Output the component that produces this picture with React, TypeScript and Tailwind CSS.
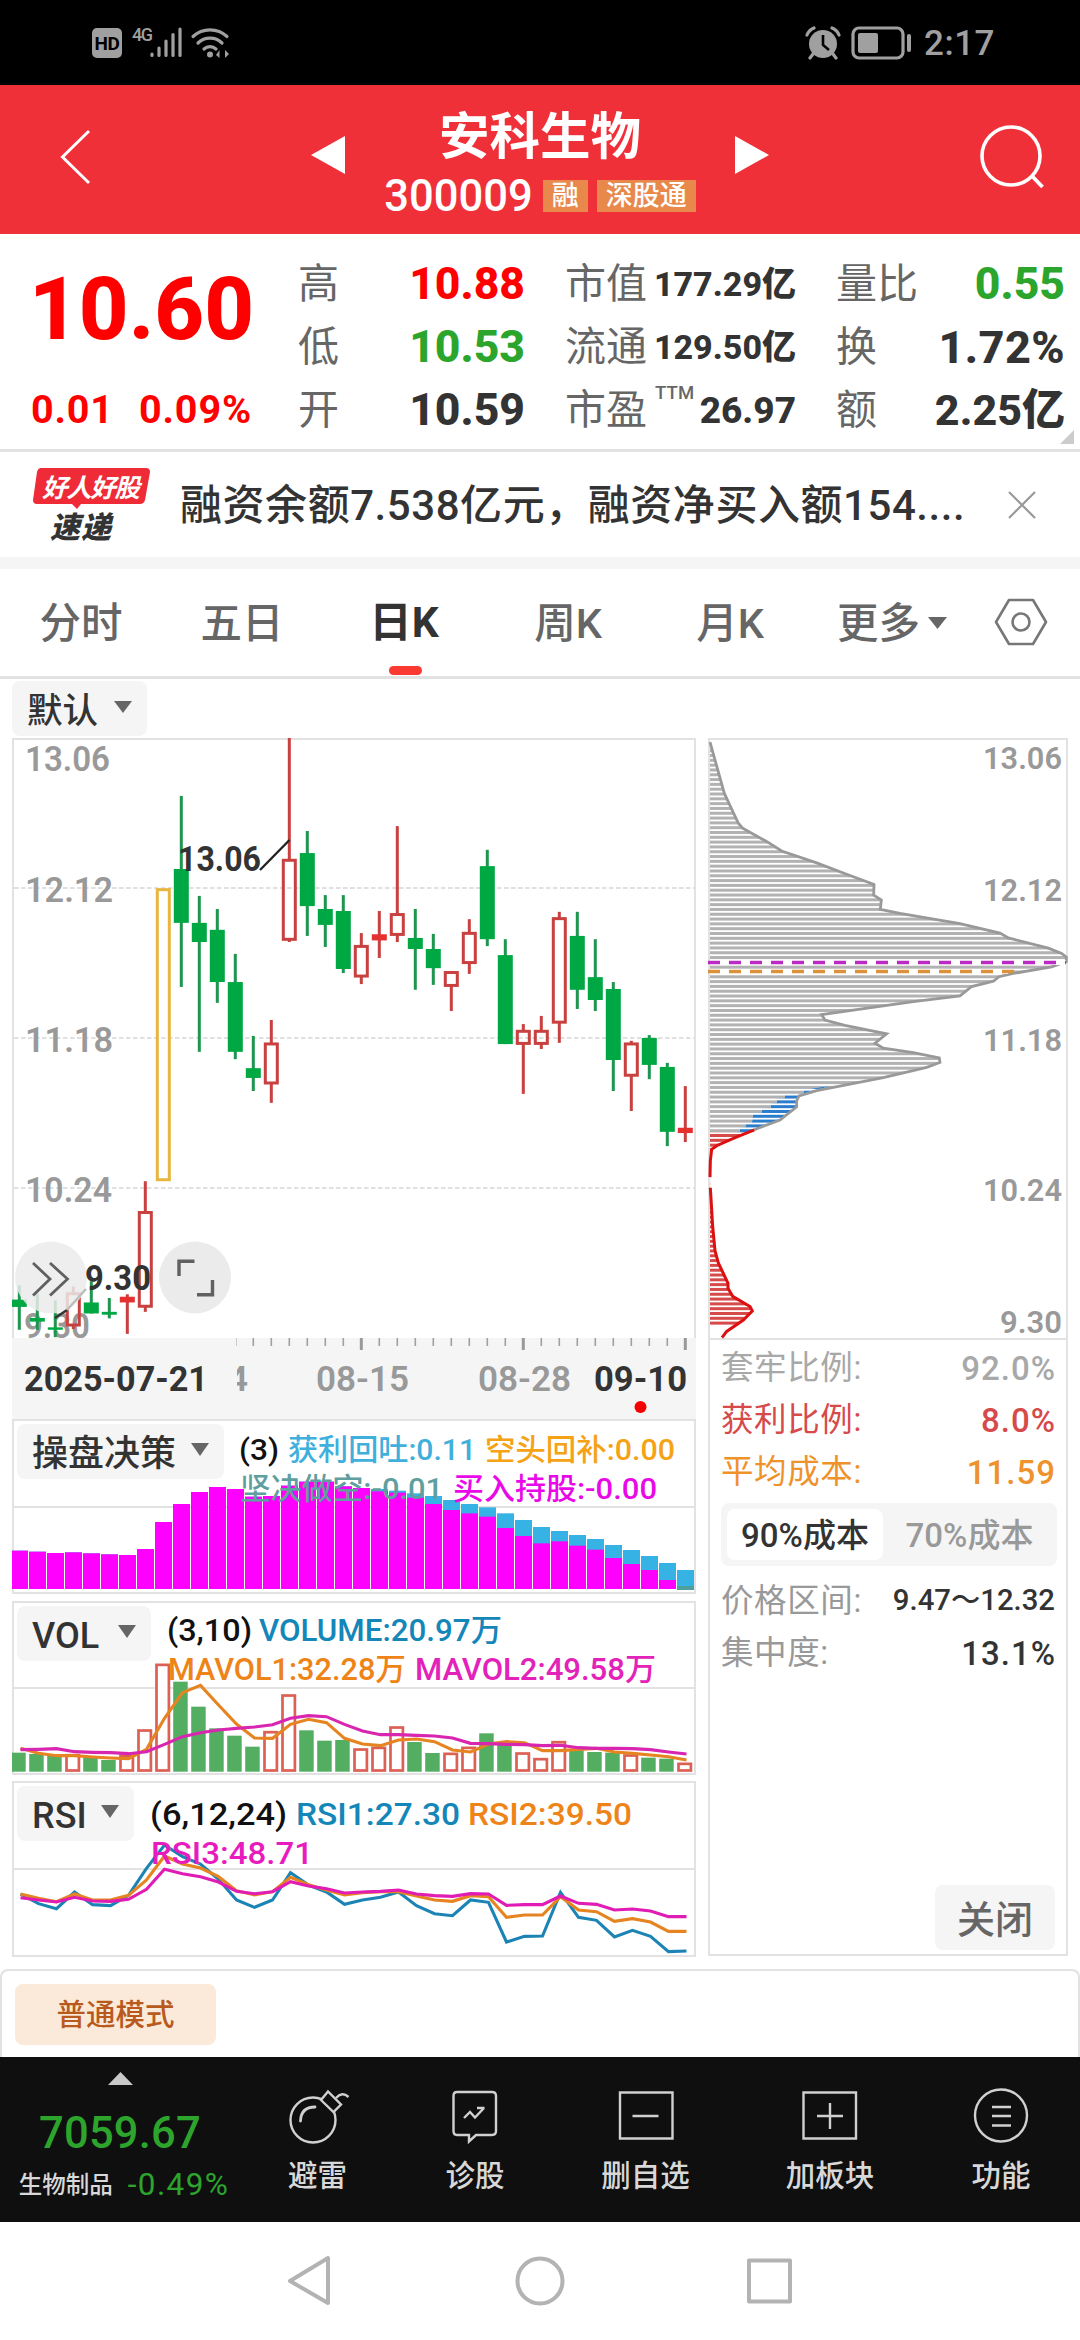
import React from "react";

const SANS = '[font-family:Roboto,"Noto_Sans_CJK_SC",sans-serif]';
const FONT = 'Roboto, "Noto Sans CJK SC", sans-serif';

type TxtProps = {
  x: number;
  y: number;
  size: number;
  fill: string;
  w?: number;
  len?: number;
  end?: boolean;
  children: string;
};

/** Chart label; x/y is the left (or right) end of the baseline. */
function Txt({ x, y, size, fill, w = 500, len, end, children }: TxtProps) {
  return (
    <text
      x={x}
      y={y}
      fontFamily={FONT}
      fontSize={size}
      fontWeight={w}
      fill={fill}
      textAnchor={end ? "end" : "start"}
      textLength={len}
      lengthAdjust="spacingAndGlyphs"
    >
      {children}
    </text>
  );
}

const RED = "#c8403f";
const GREEN = "#00a844";
const GREEN_WICK = "#1f9650";
const GRID = "#e2e2e2";

/* kind: g = falling, r = rising (hollow), f = flat (solid red), y = limit-up; then high, top, bottom, low */
const CANDLES: [string, number, number, number, number][] = [
  ["g", 1385, 1420, 1438, 1494],
  ["g", 1405, 1465, 1474, 1494],
  ["g", 1422, 1488, 1494, 1512],
  ["r", 1388, 1402, 1486, 1492],
  ["g", 1375, 1427, 1454, 1454],
  ["g", 1416, 1450, 1457, 1466],
  ["f", 1407, 1413, 1427, 1504],
  ["r", 1130, 1203, 1440, 1450],
  ["y", 412, 412, 1130, 1130],
  ["g", 186, 365, 497, 654],
  ["g", 431, 497, 544, 813],
  ["g", 463, 514, 642, 693],
  ["g", 573, 642, 813, 831],
  ["g", 774, 853, 877, 909],
  ["r", 735, 790, 893, 938],
  ["r", 44, 340, 541, 544],
  ["g", 272, 326, 456, 529],
  ["g", 429, 463, 502, 556],
  ["g", 429, 468, 610, 620],
  ["r", 522, 551, 631, 647],
  ["f", 468, 525, 540, 583],
  ["r", 260, 473, 529, 544],
  ["g", 463, 534, 561, 661],
  ["g", 524, 561, 608, 649],
  ["r", 615, 615, 654, 713],
  ["r", 488, 519, 598, 622],
  ["g", 318, 358, 537, 554],
  ["g", 537, 576, 794, 794],
  ["r", 745, 759, 796, 916],
  ["r", 725, 759, 796, 806],
  ["r", 470, 483, 744, 791],
  ["g", 470, 529, 661, 708],
  ["g", 537, 630, 686, 713],
  ["g", 642, 659, 833, 909],
  ["r", 786, 790, 874, 958],
  ["g", 772, 779, 845, 880],
  ["g", 840, 850, 1009, 1044],
  ["f", 897, 999, 1012, 1034],
];
const cx = (i: number) => 19.3 + 18 * i;
const py = (v: number) => 720 + v / 2.45;

function Candles() {
  return (
    <>
      {CANDLES.map(([k, h, t, b, l], i) => {
        const x = cx(i);
        const top = py(t);
        const bot = py(b);
        if (k === "g")
          return (
            <g key={i}>
              <rect x={x - 1.5} y={py(h)} width={3} height={py(l) - py(h)} fill={GREEN_WICK} />
              <rect x={x - 7.5} y={top} width={15} height={bot - top} fill={GREEN} />
            </g>
          );
        if (k === "f")
          return (
            <g key={i}>
              <rect x={x - 1.5} y={py(h)} width={3} height={py(l) - py(h)} fill={RED} />
              <rect x={x - 7.5} y={top} width={15} height={bot - top} fill="#e53030" />
            </g>
          );
        return (
          <g key={i}>
            {k === "r" && (
              <>
                <rect x={x - 1.5} y={py(h)} width={3} height={top - py(h) + 1} fill={RED} />
                <rect x={x - 1.5} y={bot - 1} width={3} height={py(l) - bot + 1} fill={RED} />
              </>
            )}
            <rect
              x={x - 6}
              y={top + 1.5}
              width={12}
              height={bot - top - 3}
              fill="none"
              stroke={k === "y" ? "#e8b53e" : RED}
              strokeWidth={3}
            />
          </g>
        );
      })}
    </>
  );
}

function KChart() {
  return (
    <svg className="block h-[600px] w-[684px]" viewBox="12 738 684 600">
      <path d="M13 1338V739H695V1338" fill="none" stroke={GRID} strokeWidth={2} />
      {[888, 1038, 1188].map((y) => (
        <path key={y} d={`M14 ${y}H694`} stroke="#e0e0e0" strokeWidth={2} strokeDasharray="4.5 2.5" />
      ))}
      <Txt x={25} y={770.5} size={35.5} fill="#999" w={600} len={85}>13.06</Txt>
      <Txt x={25} y={901.5} size={35.5} fill="#999" w={600} len={88}>12.12</Txt>
      <Txt x={25} y={1051.5} size={35.5} fill="#999" w={600} len={88}>11.18</Txt>
      <Txt x={25} y={1201.5} size={35.5} fill="#999" w={600} len={87}>10.24</Txt>
      <Txt x={24} y={1337.5} size={35.5} fill="#999" w={600} len={66}>9.30</Txt>
      <Candles />
      <circle cx={51} cy={1277.5} r={36} fill="#ebebeb" fillOpacity={0.85} />
      <circle cx={195} cy={1277.5} r={36} fill="#ebebeb" />
      <path d="M33 1263L50 1279L33 1295.5M50 1263L67.5 1279L50 1295.5" fill="none" stroke="#606060" strokeWidth={2.8} />
      <path d="M179 1276V1261.2H194.5M197 1294.8H212.5V1280" fill="none" stroke="#606060" strokeWidth={3.4} />
      <path d="M55 1318L67 1310" stroke="#333" strokeWidth={2.4} />
      <path d="M67 1310L86 1289" stroke="#bdbdbd" strokeWidth={2.4} />
      <path d="M260 870L289.5 840" stroke="#222" strokeWidth={2.4} />
      <Txt x={178} y={871} size={35.5} fill="#333" w={700} len={83}>13.06</Txt>
      <Txt x={85} y={1290} size={35.5} fill="#333" w={700} len={66}>9.30</Txt>
    </svg>
  );
}

function Axis() {
  return (
    <svg className="block h-[81px] w-[684px] bg-[#f5f5f5]" viewBox="12 1338 684 81">
      {CANDLES.map((_, i) => {
        if (i < 13) return null;
        const major = i === 19 || i === 28 || i === 37;
        return (
          <rect
            key={i}
            x={cx(i) - (major ? 1.5 : 0.8)}
            y={1338}
            width={major ? 3 : 1.6}
            height={major ? 12 : 8}
            fill={major ? "#999" : "#a0a0a0"}
          />
        );
      })}
      <rect x={236} y={1338} width={1} height={8} fill="#ccc" />
      <clipPath id="axis-clip">
        <rect x={237} y={1350} width={30} height={60} />
      </clipPath>
      <g clipPath="url(#axis-clip)">
        <Txt x={228} y={1391} size={35} fill="#999" w={600}>4</Txt>
      </g>
      <Txt x={24} y={1391} size={35} fill="#333" w={700} len={184}>2025-07-21</Txt>
      <Txt x={316} y={1391} size={35} fill="#999" w={600} len={93}>08-15</Txt>
      <Txt x={478} y={1391} size={35} fill="#999" w={600} len={93}>08-28</Txt>
      <Txt x={594} y={1391} size={35} fill="#333" w={700} len={93}>09-10</Txt>
      <circle cx={640.5} cy={1407} r={6} fill="#f50000" />
    </svg>
  );
}

/* [total top, magenta top] of each stacked bar */
const STRATEGY: [number, number][] = [
  [692, 692], [695, 695], [699, 699], [697, 697], [700, 700], [703, 703], [705, 705], [687, 687],
  [606, 606], [552, 552], [516, 516], [501, 501], [507, 507], [530, 530], [528, 528], [497, 497],
  [485, 485], [485, 485], [499, 499], [504, 504], [507, 514], [512, 518], [520, 533], [528, 552],
  [540, 570], [552, 580], [562, 590], [580, 624], [600, 648], [621, 670], [633, 664], [645, 677],
  [657, 689], [675, 714], [690, 732], [708, 750], [729, 780], [750, 798],
];

function StrategyChart() {
  const y = (v: number) => 1320 + v / 3;
  return (
    <svg className="block h-[175px] w-[684px]" viewBox="12 1419 684 175">
      <path d="M13 1507H695" stroke={GRID} strokeWidth={2} />
      <rect x={13} y={1420} width={682} height={173} fill="none" stroke={GRID} strokeWidth={2} />
      {STRATEGY.map(([t, m], i) => {
        const x = 11 + 18 * i;
        const last = i === 37;
        return (
          <g key={i}>
            <rect x={x} y={y(t)} width={17} height={1589 - y(t)} fill="#36b2e4" />
            <rect x={x} y={y(m)} width={17} height={(last ? 1590 : 1589) - y(m)} fill={last ? "#4f9f9f" : "#ff00ff"} />
          </g>
        );
      })}
      <Txt x={239} y={1460} size={30} fill="#111" len={40}>(3)</Txt>
      <Txt x={288} y={1460} size={30} fill="#3fb0dc" len={188}>获利回吐:0.11</Txt>
      <Txt x={485} y={1460} size={30} fill="#f5a216" len={190}>空头回补:0.00</Txt>
      <Txt x={240} y={1499} size={30} fill="#5f9fa0" len={203}>坚决做空:-0.01</Txt>
      <Txt x={453} y={1499} size={30} fill="#e808e8" len={204}>买入持股:-0.00</Txt>
    </svg>
  );
}

const VOLUME: [string, number][] = [
  ["g", 488], ["g", 492], ["g", 497], ["r", 492], ["g", 503], ["g", 510], ["r", 494], ["r", 418],
  ["r", 221], ["g", 275], ["g", 350], ["g", 415], ["g", 437], ["g", 470], ["r", 423], ["r", 313],
  ["g", 421], ["g", 452], ["g", 450], ["r", 475], ["r", 470], ["r", 409], ["g", 456], ["g", 489],
  ["r", 488], ["r", 470], ["g", 430], ["g", 463], ["r", 487], ["r", 504], ["r", 453], ["g", 480],
  ["g", 486], ["g", 488], ["r", 493], ["g", 503], ["g", 506], ["r", 518],
];
const MAVOL1 = [475, 490, 497, 497, 501, 504, 506, 478, 385, 308, 286, 345, 402, 444, 445, 403, 388, 398, 445, 462, 467, 450, 447, 455, 480, 486, 462, 455, 458, 482, 482, 478, 475, 486, 490, 495, 500, 510];
const MAVOL2 = [479, 478, 476, 485, 487, 488, 491, 485, 463, 440, 428, 420, 415, 411, 404, 385, 377, 380, 403, 423, 434, 434, 436, 438, 444, 460, 461, 463, 464, 467, 466, 473, 475, 475, 476, 479, 486, 492];
const RSI1 = [912, 941, 956, 906, 944, 947, 916, 835, 765, 800, 822, 868, 930, 952, 930, 848, 885, 906, 943, 930, 922, 906, 947, 971, 977, 930, 937, 1056, 1039, 1038, 907, 982, 991, 1041, 1021, 1039, 1085, 1083];
const RSI2 = [912, 925, 935, 912, 930, 930, 916, 870, 798, 822, 834, 860, 902, 915, 905, 862, 884, 900, 915, 908, 905, 905, 918, 930, 934, 917, 920, 982, 975, 975, 920, 960, 965, 994, 986, 996, 1024, 1024];
const RSI3 = [923, 930, 936, 922, 933, 934, 928, 898, 838, 851, 860, 876, 904, 911, 905, 875, 888, 896, 909, 906, 904, 900, 912, 917, 919, 911, 912, 946, 944, 944, 918, 940, 943, 960, 957, 963, 980, 980];

function Line({ data, color }: { data: number[]; color: string }) {
  return (
    <polyline
      points={data.map((v, i) => `${20.5 + 18 * i},${1590 + v / 3}`).join(" ")}
      fill="none"
      stroke={color}
      strokeWidth={3.1}
    />
  );
}

function VolumeChart() {
  const y = (v: number) => 1590 + v / 3;
  return (
    <svg className="block h-[174px] w-[684px]" viewBox="12 1601 684 174">
      <path d="M13 1688H695" stroke={GRID} strokeWidth={2} />
      <rect x={13} y={1602} width={682} height={172} fill="none" stroke={GRID} strokeWidth={2} />
      {VOLUME.map(([k, v], i) => {
        const x = 11.2 + 18 * i;
        return k === "g" ? (
          <rect key={i} x={x} y={y(v)} width={14.5} height={1771.7 - y(v)} fill="#53ae61" />
        ) : (
          <rect
            key={i}
            x={x + 1.3}
            y={y(v) + 1.2}
            width={12.4}
            height={1771 - y(v) - 1.7}
            fill="#fff"
            stroke="#dc6054"
            strokeWidth={2.7}
          />
        );
      })}
      <Line data={MAVOL1} color="#e58420" />
      <Line data={MAVOL2} color="#d826b0" />
      <Txt x={167} y={1641} size={30.5} fill="#111" len={85}>(3,10)</Txt>
      <Txt x={259} y={1641} size={30.5} fill="#1486b8" len={243}>VOLUME:20.97万</Txt>
      <Txt x={168} y={1680} size={30.5} fill="#ee8418" len={238}>MAVOL1:32.28万</Txt>
      <Txt x={415} y={1680} size={30.5} fill="#e222b8" len={241}>MAVOL2:49.58万</Txt>
    </svg>
  );
}

function RsiChart() {
  return (
    <svg className="block h-[176px] w-[684px]" viewBox="12 1781 684 176">
      <path d="M13 1869H695" stroke={GRID} strokeWidth={2} />
      <rect x={13} y={1782} width={682} height={174} fill="none" stroke={GRID} strokeWidth={2} />
      <Line data={RSI1} color="#1c84b4" />
      <Line data={RSI2} color="#e58420" />
      <Line data={RSI3} color="#e01cb4" />
      <Txt x={150} y={1825} size={32} fill="#111" len={137}>(6,12,24)</Txt>
      <Txt x={296} y={1825} size={32} fill="#1486b8" len={164}>RSI1:27.30</Txt>
      <Txt x={468} y={1825} size={32} fill="#ee8418" len={164}>RSI2:39.50</Txt>
      <Txt x={151} y={1864} size={32} fill="#e81cbe" len={162}>RSI3:48.71</Txt>
    </svg>
  );
}

function Down({ className = "w-[18px] h-3" }: { className?: string }) {
  return (
    <svg className={className} viewBox="0 0 18 12" preserveAspectRatio="none">
      <path d="M0 0H18L9 12Z" fill="#666" />
    </svg>
  );
}

function PanelButton({ label, className }: { label: string; className: string }) {
  return (
    <button
      className={`absolute left-[5px] top-[5px] flex h-[55px] items-center justify-between rounded-lg bg-[#f5f5f5] pl-[15px] pr-[15px] text-[36px] leading-none font-medium text-[#333] ${className}`}
    >
      <span className="pt-[5px]">{label}</span>
      <Down className="mb-1 h-[13px] w-[18px]" />
    </button>
  );
}

const OUTLINE: [number, number][] = [
  [30, 54], [73, 180], [115, 253], [128, 265], [207, 301], [245, 321], [350, 350], [440, 378],
  [522, 403], [521, 429], [544, 441], [541, 464], [600, 474], [780, 499], [900, 522], [925, 534],
  [1045, 559], [1085, 572], [1099, 581], [1099, 592], [1055, 605], [940, 621], [897, 629],
  [880, 640], [815, 653], [780, 676], [640, 690], [365, 722], [375, 735], [435, 748], [560, 769],
  [525, 792], [550, 804], [640, 815], [718, 828], [720, 839], [680, 851], [550, 876], [350, 908],
  [297, 921], [290, 933], [290, 948], [240, 980], [163, 1004],
];
const RED_TOP: [number, number][] = [[163, 1004], [100, 1025], [50, 1043], [35, 1052], [31, 1080], [30, 1120]];
const RED_LOW: [number, number][] = [
  [31, 1146], [38, 1240], [45, 1300], [55, 1330], [84, 1380], [84, 1392], [98, 1412], [150, 1437],
  [157, 1448], [130, 1470], [80, 1498], [66, 1513],
];
const BLUE: [number, number][] = [
  [390, 896], [312, 906], [312, 915], [255, 917], [255, 927], [231, 928], [231, 938], [213, 940],
  [213, 950], [186, 951], [186, 962], [160, 963], [156, 987], [137, 988], [137, 998], [120, 999],
  [120, 1009], [102, 1010], [102, 1022], [163, 1004], [240, 980], [290, 948], [290, 933], [297, 921], [350, 908],
];
const pts = (a: [number, number][]) => a.map(([u, v]) => `${700 + u / 3},${py(v)}`).join(" ");

function ChipChart() {
  const rows = Array.from({ length: 125 }, (_, i) => py(582) + (i - 48) * 4.81);
  return (
    <svg className="block h-[602px] w-[360px]" viewBox="708 738 360 602">
      <defs>
        <clipPath id="chip-gray"><polygon points={`710,${py(54)} ${pts(OUTLINE)} 733,${py(1012)} 710,${py(1012)}`} /></clipPath>
        <clipPath id="chip-red"><polygon points={`710,${py(1010)} ${pts([[145, 1010], ...RED_TOP.slice(1), ...RED_LOW])} 710,1338`} /></clipPath>
        <clipPath id="chip-blue"><polygon points={pts(BLUE)} /></clipPath>
      </defs>
      <g clipPath="url(#chip-gray)">
        {rows.map((y) => <rect key={y} x={710} y={y - 1.5} width={358} height={3} fill="#b2b2b2" />)}
      </g>
      <g clipPath="url(#chip-blue)">
        {rows.map((y) => (
          <g key={y}>
            <rect x={710} y={y - 2.4} width={358} height={4.8} fill="#fff" />
            <rect x={710} y={y - 1.5} width={358} height={3} fill="#2a7ccc" />
          </g>
        ))}
      </g>
      <g clipPath="url(#chip-red)">
        {rows.map((y) => <rect key={y} x={710} y={y - 1.5} width={358} height={3} fill="#d64a4a" />)}
      </g>
      <path d="M709 1340V739H1067V1340M709 1339H1067" fill="none" stroke={GRID} strokeWidth={2} />
      <polyline points={pts(OUTLINE)} fill="none" stroke="#999" strokeWidth={2.8} />
      <polyline points={pts(RED_TOP)} fill="none" stroke="#dc1010" strokeWidth={3} />
      <polyline points={pts(RED_LOW)} fill="none" stroke="#dc1010" strokeWidth={3} />
      <path d={`M710 ${py(594)}H1066`} stroke="#fff" strokeWidth={5} />
      <path d={`M710 ${py(616)}H1008`} stroke="#fff" strokeWidth={5} />
      <path d={`M708 ${py(594)}H1066`} stroke="#bb2bc4" strokeWidth={3.4} strokeDasharray="12 9" />
      <path d={`M708 ${py(616)}H1014`} stroke="#db923a" strokeWidth={3.4} strokeDasharray="12 9" />
      <Txt x={1062} y={769.3} size={31.5} fill="#999" w={600} len={79} end>13.06</Txt>
      <Txt x={1062} y={901} size={31.5} fill="#999" w={600} len={79} end>12.12</Txt>
      <Txt x={1062} y={1051} size={31.5} fill="#999" w={600} len={79} end>11.18</Txt>
      <Txt x={1062} y={1201} size={31.5} fill="#999" w={600} len={79} end>10.24</Txt>
      <Txt x={1062} y={1333} size={31.5} fill="#999" w={600} len={62} end>9.30</Txt>
    </svg>
  );
}

function Stat({ label, value, row, val = "text-[33px] tracking-[1px] -mr-px" }: { label: string; value: string; row: string; val?: string }) {
  return (
    <div className={`flex h-[52px] items-center justify-between leading-none ${row}`}>
      <span className="text-[32.5px] tracking-[0.6px]">{label}</span>
      <span className={`font-medium ${val}`}>{value}</span>
    </div>
  );
}

function StatusBar() {
  return (
    <header className="flex h-[85px] justify-between bg-black px-[92px] pr-[85px] text-[#a0a0a0]">
      <div className="flex pt-[27px]">
        <div className="mt-px flex h-[30px] w-[30px] items-center justify-center rounded-[5px] bg-[#a0a0a0] text-[19px] leading-none font-bold tracking-[-0.5px] text-black">HD</div>
        <span className="ml-[10px] w-[22px] text-[18px] leading-[15px] font-medium tracking-[-1.5px]">4G</span>
        <svg className="-ml-1 h-[31px] w-[82px]" viewBox="150 27 82 31">
          <g stroke="#a0a0a0" strokeWidth={3.2} strokeLinecap="round" fill="none">
            <path d="M152 55.5V54M159 55.5V48M166 55.5V41M173 55.5V34.5M180 55.5V29" />
            <path d="M193 36.5A25 25 0 0 1 227 36.5M198 43A17 17 0 0 1 222 43M204 49A9 9 0 0 1 216 49" strokeWidth={3.2} />
          </g>
          <circle cx={210} cy={54.5} r={3} fill="#a0a0a0" />
          <path d="M216 55L219.5 50V58M229 54L225 58V50" fill="#a0a0a0" />
        </svg>
      </div>
      <div className="flex pt-[26px]">
        <svg className="h-[34px] w-[108px]" viewBox="804 26 108 34">
          <circle cx={822} cy={44} r={14} fill="#a0a0a0" />
          <path d="M822 35V45L828 50" stroke="#000" strokeWidth={2.6} fill="none" />
          <path d="M806 35Q808 30 813 28M838 35Q836 30 831 28M812 54L809 58M832 54L835 58" stroke="#a0a0a0" strokeWidth={3.2} fill="none" strokeLinecap="round" />
          <rect x={852} y={28} width={50} height={30} rx={6} fill="none" stroke="#a0a0a0" strokeWidth={3.2} />
          <rect x={857} y={33} width={20} height={20} rx={2} fill="#a0a0a0" />
          <path d="M908 36V50" stroke="#a0a0a0" strokeWidth={4} strokeLinecap="round" />
        </svg>
        <span className="ml-[11px] text-[35px] leading-[36px] font-medium tracking-[0.5px]">2:17</span>
      </div>
    </header>
  );
}

function TitleBar() {
  return (
    <div className="flex h-[149px] items-center justify-between bg-[#f03039] pr-[35px] pl-[58px] text-white">
      <svg className="mb-[6px] h-[60px] w-[36px]" viewBox="0 0 36 60">
        <path d="M31 4L4.500 30L31 56" fill="none" stroke="#fff" strokeWidth={3} />
      </svg>
      <div className="ml-[7px] flex items-center">
        <svg className="mb-[9px] h-[38px] w-[34px]" viewBox="0 0 34 38"><path d="M34 0V38L0 19Z" fill="#fff" /></svg>
        <div className="flex w-[390px] flex-col items-center pt-[13px]">
          <h1 className="text-[50.500px] leading-[62px] font-bold">安科生物</h1>
          <div className="flex h-[58px] items-center">
            <span className="text-[43.500px] leading-none font-medium">300009</span>
            <span className="mb-[2px] ml-[10px] flex h-8 items-center bg-[#e8894b] px-[9px] text-[27px] leading-none font-medium">融</span>
            <span className="mb-[2px] ml-[9px] flex h-8 items-center bg-[#e8894b] px-[9px] text-[27px] leading-none font-medium">深股通</span>
          </div>
        </div>
        <svg className="mb-[9px] h-[38px] w-[34px]" viewBox="0 0 34 38"><path d="M0 0V38L34 19Z" fill="#fff" /></svg>
      </div>
      <svg className="mb-[7px] h-[66px] w-[66px]" viewBox="978 122 66 66">
        <circle cx={1010} cy={155} r={29} fill="none" stroke="#fff" strokeWidth={3.6} />
        <path d="M1031 175L1041.500 186" stroke="#fff" strokeWidth={3.8} />
      </svg>
    </div>
  );
}

function Quote({ label, value, vc, sup }: { label: string; value: string; vc: string; sup?: string }) {
  return (
    <div className="flex h-[63px] items-center justify-between pt-[3px] leading-none">
      <span className="flex text-[41px] text-[#666]">
        {label}
        {sup && <sup className="top-0 -mt-[2px] ml-2 text-[18.5px] leading-[10px] font-medium tracking-[0.2px]">{sup}</sup>}
      </span>
      <span className={`font-extrabold ${vc}`}>{value}</span>
    </div>
  );
}

function Quotes() {
  return (
    <section className="relative flex h-[218px] border-b-[3px] border-[#e2e2e2] pt-[17px]">
      <div className="flex w-[283px] flex-col items-center font-extrabold text-[#ff0000]">
        <div className="h-[114px] text-[86.500px] leading-[117px]">10.60</div>
        <div className="mt-3 flex h-[63px] items-center gap-[25px] pt-[2px] text-[39.500px] leading-none font-bold tracking-[0.9px]">
          <span>0.01</span>
          <span>0.09%</span>
        </div>
      </div>
      <div className="ml-[15px] w-[227px]">
        <Quote label="高" value="10.88" vc="text-[44.500px] text-[#ff0000]" />
        <Quote label="低" value="10.53" vc="text-[44.500px] text-[#2ba52b]" />
        <Quote label="开" value="10.59" vc="text-[44.500px] text-[#333]" />
      </div>
      <div className="ml-[40px] w-[231px]">
        <Quote label="市值" value="177.29亿" vc="text-[34px] text-[#333]" />
        <Quote label="流通" value="129.50亿" vc="text-[34px] text-[#333]" />
        <Quote label="市盈" sup="TTM" value="26.97" vc="text-[37px] text-[#333]" />
      </div>
      <div className="ml-[40px] w-[229px]">
        <Quote label="量比" value="0.55" vc="text-[44.500px] text-[#2ba52b]" />
        <Quote label="换" value="1.72%" vc="text-[45px] tracking-[0.4px] text-[#333]" />
        <Quote label="额" value="2.25亿" vc="text-[43px] text-[#333]" />
      </div>
      <svg className="absolute right-[6px] bottom-[5px] h-[14px] w-[14px]" viewBox="0 0 14 14"><path d="M14 0V14H0Z" fill="#ccc" /></svg>
    </section>
  );
}

function News() {
  return (
    <section className="flex h-[117px] items-center border-b-[12px] border-[#f5f5f5] box-border">
      <svg className="ml-[30px] h-[80px] w-[122px] shrink-0" viewBox="30 466 122 80">
        <path d="M41 469H146Q150 469 150 473L145 501Q144 505 140 505H81L77 510L72 505H37Q33 505 33 501L37 473Q38 469 41 469Z" fill="#ee2b36" />
        <text x={42} y={498} fontFamily={FONT} fontSize={25.5} fontWeight={700} fill="#fff" fontStyle="italic" textLength={98}>好人好股</text>
        <text x={50} y={538.5} fontFamily={FONT} fontSize={30} fontWeight={900} fill="#333" fontStyle="italic" textLength={61}>速递</text>
      </svg>
      <p className="ml-[28px] w-[810px] text-[42px] leading-[60px] font-medium tracking-[0.55px] whitespace-nowrap pt-[3px] text-[#333]">融资余额7.538亿元，融资净买入额154....</p>
      <svg className="ml-[16px] h-[32px] w-[32px]" viewBox="0 0 32 32">
        <path d="M3 3L29 29M29 3L3 29" stroke="#999" strokeWidth={2.200} />
      </svg>
    </section>
  );
}

function Tabs() {
  const tab = "flex h-full items-center pt-[2px]";
  return (
    <nav className="relative flex h-[110px] border-b-[3px] border-[#e2e2e2] text-[41.500px] leading-none font-medium text-[#666]">
      <div className={`${tab} w-[162px] justify-center`}>分时</div>
      <div className={`${tab} w-[160px] justify-center`}>五日</div>
      <div className={`${tab} relative w-[166px] justify-center pr-[2px] text-[42.500px] font-bold text-[#333]`}>
        日K
        <i className="absolute bottom-[1px] left-[67px] h-[9px] w-[33px] rounded-full bg-[#fa3a32]" />
      </div>
      <div className={`${tab} w-[160px] justify-center`}>周K</div>
      <div className={`${tab} w-[164px] justify-center`}>月K</div>
      <div className={`${tab} pl-[25px]`}>
        更多
        <Down className="mb-px ml-2 h-[12px] w-[19px]" />
      </div>
      <div className={`${tab} ml-[45px]`}>
        <svg className="mb-[3px] h-[50px] w-[58px]" viewBox="0 0 58 50">
          <path d="M17 3H41L54 25L41 47H17L4 25Z" fill="none" stroke="#777" strokeWidth={2.600} strokeLinejoin="round" />
          <circle cx={29} cy={25} r={8.500} fill="none" stroke="#777" strokeWidth={2.600} />
        </svg>
      </div>
    </nav>
  );
}

const ico = "h-[60px] w-[64px]";
const stroke = { fill: "none", stroke: "#d0d0d0", strokeWidth: 2.4 };

function Action({ label, width, children }: { label: string; width: string; children: React.ReactNode }) {
  return (
    <button className={`flex flex-col items-center pt-[29px] ${width}`}>
      {children}
      <span className="mt-[15px] text-[29.500px] leading-[30px] font-medium text-[#d8d8d8]">{label}</span>
    </button>
  );
}

function BottomBar() {
  return (
    <footer className="flex h-[165px] bg-[#0f0f0f]">
      <div className="flex w-[240px] flex-col items-center">
        <svg className="mt-[15px] h-[13px] w-[25px]" viewBox="0 0 25 13"><path d="M12.500 0L25 13H0Z" fill="#c8c8c8" /></svg>
        <div className="mt-[26px] text-[43.500px] leading-[46px] font-medium tracking-[0.200px] text-[#2da52d]">7059.67</div>
        <div className="mt-[12px] flex items-center gap-[15px] pl-[8px] leading-[32px]">
          <span className="text-[23.500px] font-medium text-[#d8d8d8]">生物制品</span>
          <span className="text-[31.500px] tracking-[1.400px] text-[#2da52d]">-0.49%</span>
        </div>
      </div>
      <Action label="避雷" width="w-[155px]">
        <svg className={ico} viewBox="285 2086 64 60">
          <circle cx={312} cy={2120} r={22.500} {...stroke} />
          <path d="M299.500 2121Q300 2107 314 2107" {...stroke} strokeWidth={2.800} strokeLinecap="round" />
          <path d="M320 2100L327 2091.500L340 2104.500L332.500 2112Z" {...stroke} fill="#0f0f0f" />
          <path d="M335 2098Q341 2091 347.500 2097" {...stroke} />
        </svg>
      </Action>
      <Action label="诊股" width="w-[160px]">
        <svg className={ico} viewBox="442 2086 64 60">
          <path d="M456 2092H491Q495 2092 495 2096V2131Q495 2135 491 2135H475L468 2141.500V2135H456Q452.500 2135 452.500 2131V2096Q452.500 2092 456 2092Z" {...stroke} />
          <path d="M463 2118L469 2112L474 2117.500L483 2108M476 2108H483.500" {...stroke} />
        </svg>
      </Action>
      <Action label="删自选" width="w-[181px]">
        <svg className={ico} viewBox="613.500 2086 64 60">
          <path d="M619.500 2092.500H672V2138.500H619.500ZM632 2116H658" {...stroke} />
        </svg>
      </Action>
      <Action label="加板块" width="w-[188px]">
        <svg className={ico} viewBox="798 2086 64 60">
          <path d="M803.500 2092.500H856V2138.500H803.500ZM817 2116H843M830 2103V2129" {...stroke} />
        </svg>
      </Action>
      <Action label="功能" width="w-[154px]">
        <svg className={ico} viewBox="968 2086 64 60">
          <circle cx={1000} cy={2115.500} r={26} {...stroke} />
          <path d="M991 2107H1010M991 2116H1010M991 2125.500H1010" {...stroke} />
        </svg>
      </Action>
    </footer>
  );
}

export default function App() {
  return (
    <main className={`flex h-[2340px] w-[1080px] flex-col overflow-hidden bg-white ${SANS}`}>
      <StatusBar />
      <TitleBar />
      <Quotes />
      <News />
      <Tabs />
      <div className="h-[59px] pt-[2px] pl-3">
        <button className="flex h-[55px] w-[135px] items-center justify-between rounded-lg bg-[#f5f5f5] pr-[15px] pl-[15px] text-[35.500px] leading-none font-medium text-[#333]">
          <span className="pt-[7px]">默认</span>
          <Down className="mb-[3px] h-[12px] w-[18px]" />
        </button>
      </div>

      <div className="flex h-[1219px] gap-3 px-3">
        <div className="flex w-[684px] flex-col">
          <KChart />
          <Axis />
          <div className="relative h-[175px]">
            <StrategyChart />
            <PanelButton label="操盘决策" className="w-[207px]" />
          </div>
          <div className="relative mt-[7px] h-[174px]">
            <VolumeChart />
            <PanelButton label="VOL" className="w-[134px]" />
          </div>
          <div className="relative mt-[6px] h-[176px]">
            <RsiChart />
            <PanelButton label="RSI" className="w-[117px]" />
          </div>
        </div>

        <aside className="flex w-[360px] flex-col">
          <ChipChart />
          <div className="flex h-[616px] flex-col border-x-2 border-b-2 border-[#e2e2e2] pr-[11px] pl-[11px] pt-[2px]">
            <Stat label="套牢比例:" value="92.0%" row="text-[#a8a8a8]" />
            <Stat label="获利比例:" value="8.0%" row="text-[#d64a4a]" />
            <Stat label="平均成本:" value="11.59" row="text-[#ee922c]" />
            <div className="mt-[5px] flex h-[63px] w-[336px] items-center rounded-lg bg-[#f5f5f5] pl-[6px] text-[33px] leading-none font-medium">
              <span className="flex h-[51px] w-[156px] items-center justify-center rounded-lg bg-white pt-[2px] text-[#333]">90%成本</span>
              <span className="flex h-[51px] flex-1 items-center justify-center pt-[2px] pr-px text-[#999]">70%成本</span>
            </div>
            <div className="h-[9px]" />
            <Stat label="价格区间:" value="9.47～12.32" row="text-[#999] [&>span+span]:text-[#333]" val="text-[29.300px]" />
            <Stat label="集中度:" value="13.1%" row="text-[#999] [&>span+span]:text-[#333]" />
            <button className="mt-auto mb-[4px] flex h-[65px] w-[120px] items-center justify-center self-end rounded-lg bg-[#f5f5f5] pt-[5px] text-[38px] leading-none font-medium text-[#666]">关闭</button>
          </div>
        </aside>
      </div>

      <section className="mt-[12px] h-[88px] rounded-t-lg border-x-2 border-t-2 border-[#e2e2e2] pt-[13px] pl-[13px]">
        <button className="flex h-[61px] w-[201px] items-center justify-center rounded-lg bg-[#fbead9] pt-[2px] text-[29.500px] leading-none font-medium text-[#b85a1e]">普通模式</button>
      </section>

      <BottomBar />

      <div className="flex h-[118px] bg-white">
        <svg className="h-full w-full" viewBox="0 2222 1080 118">
          <g fill="none" stroke="#b3b3b3" strokeWidth={4} strokeLinejoin="round">
            <path d="M328 2258V2303L290 2281Z" />
            <circle cx={540} cy={2281} r={22.500} />
            <rect x={749} y={2260.500} width={41} height={41} />
          </g>
        </svg>
      </div>
    </main>
  );
}
